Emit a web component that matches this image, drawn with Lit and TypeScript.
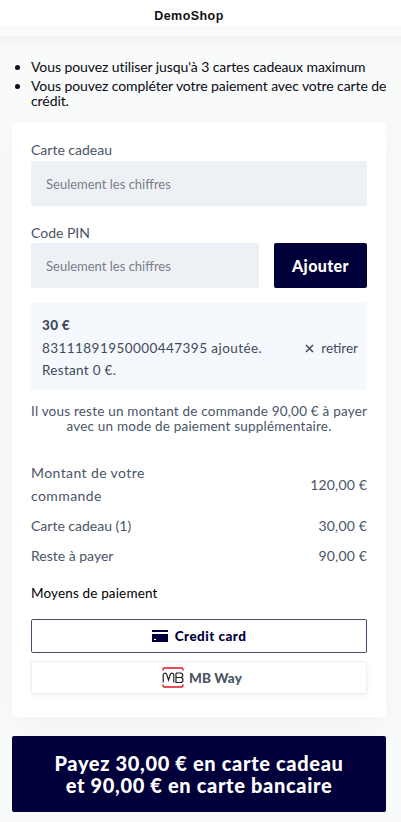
import { LitElement, html, css } from "lit";
import { customElement } from "lit/decorators.js";

@customElement("app-root")
export class AppRoot extends LitElement {
  static styles = css`
    :host { display: block; width: 401px; height: 822px; overflow: hidden; background: #f9fafa;
      font-family: Lato, "Liberation Sans", sans-serif; font-size: 14px; color: #4a5568; box-sizing: border-box; }
    * { box-sizing: border-box; }
    .head { height: 26px; background: #fff; text-align: center; font: 700 12.500px/33px "Liberation Sans", sans-serif; color: #111; letter-spacing: .45px; padding-right: 23px; }
    .fade { height: 14px; margin-top: 10px; background: linear-gradient(#f1f1f2, #f9fafa); }
    ul { margin: 0; padding: 9px 11px 0 31px; color: #0a0a14; font-size: 14px; letter-spacing: -.08px; height: 73px; }
    li { line-height: 15px; margin-bottom: 4px; }
    .card { margin: 0 15px 0 12px; height: 594px; background: #fff; padding: 19px 19px 0; display: flex; flex-direction: column; box-shadow: 0 8px 30px rgba(0,0,30,.035); }
    label { display: block; height: 19px; line-height: 16px; color: #4a5568; }
    .input { height: 45px; background: #edf1f6; border-radius: 2px; padding-left: 15px; display: flex; align-items: center; color: #7a7f87; font-size: 13px; }
    .pin { margin-top: 18px; padding-top: 1px; }
    .pinrow { display: flex; gap: 15px; }
    .pinrow .input { flex: 1; }
    .add { width: 93px; height: 45px; background: #02003a; color: #fff; border-radius: 2px; display: flex; align-items: center; justify-content: center; font-weight: 900; font-size: 16px; letter-spacing: .4px; }
    .info { margin-top: 15px; height: 87px; background: #f5f9fd; padding: 14px 9px 0 11px; color: #3f4a5a; letter-spacing: .3px; font-size: 13.5px; }
    .info b { display: block; height: 20px; line-height: 16px; font-weight: 900; }
    .num { letter-spacing: .44px; }
    .line { display: flex; justify-content: space-between; height: 22px; line-height: 22px; }
    .rm { display: flex; gap: 7px; align-items: center; letter-spacing: 0; }
    .rm svg { width: 9px; height: 9px; }
    .msg { margin-top: 14px; text-align: center; line-height: 15px; font-size: 13.5px; letter-spacing: .21px; white-space: nowrap; }
    .rows { margin-top: 27px; display: flex; flex-direction: column; letter-spacing: 0; }
    .row { display: flex; justify-content: space-between; align-items: center; line-height: 23px; height: 30px; }
    .row.tall { height: 46px; margin-bottom: 3px; }
    .row .l { width: 130px; letter-spacing: .4px; }
    .val { letter-spacing: .15px; }
    h3 { margin: 13px 0 0; font-size: 13.5px; line-height: 20px; font-weight: 400; color: #000; letter-spacing: .15px; }
    .pay { height: 34px; border-radius: 2px; display: flex; align-items: center; justify-content: center; font-weight: 900; font-size: 13.5px; background: #fff; }
    .pay.on { margin-top: 16px; border: 1px solid #4c4a73; color: #02003a; gap: 7px; letter-spacing: .45px; }
    .pay.off { margin-top: 8px; border: 1px solid #eeeeee; box-shadow: 0 2px 5px rgba(0,0,0,.05); color: #4a5568; gap: 5px; height: 33px; letter-spacing: .1px; padding-left: 6px; }
    .big { margin: 19px 15px 0 12px; height: 76px; background: #02003a; color: #fff; border-radius: 2px; display: flex; align-items: center; justify-content: center; text-align: center; font-weight: 900; font-size: 20px; line-height: 22.500px; letter-spacing: .65px; }
  `;

  render() {
    return html`
      <div class="head">DemoShop</div>
      <div class="fade"></div>
      <ul>
        <li>Vous pouvez utiliser jusqu'à 3 cartes cadeaux maximum</li>
        <li>Vous pouvez compléter votre paiement avec votre carte de crédit.</li>
      </ul>
      <div class="card">
        <label>Carte cadeau</label>
        <div class="input">Seulement les chiffres</div>
        <label class="pin">Code PIN</label>
        <div class="pinrow">
          <div class="input">Seulement les chiffres</div>
          <div class="add">Ajouter</div>
        </div>
        <div class="info">
          <b>30 €</b>
          <div class="line"><span class="num">83111891950000447395 ajoutée.</span>
            <span class="rm"><svg viewBox="0 0 9 9"><path d="M1 1l7 7M8 1l-7 7" stroke="#3f4a5a" stroke-width="1.5" fill="none"/></svg>retirer</span></div>
          <div class="line">Restant 0 €.</div>
        </div>
        <div class="msg">Il vous reste un montant de commande 90,00 € à payer<br>avec un mode de paiement supplémentaire.</div>
        <div class="rows">
          <div class="row tall"><span class="l">Montant de votre commande</span><span class="val">120,00 €</span></div>
          <div class="row"><span>Carte cadeau (1)</span><span class="val">30,00 €</span></div>
          <div class="row"><span>Reste à payer</span><span class="val">90,00 €</span></div>
        </div>
        <h3>Moyens de paiement</h3>
        <div class="pay on">
          <svg width="16" height="12" viewBox="0 0 16 12"><path d="M0 0h16v2H0zM0 4h16v8H0z" fill="#02003a"/><rect x="2" y="9" width="2" height="1" fill="#fff"/></svg>
          Credit card
        </div>
        <div class="pay off">
          <svg width="22" height="21" viewBox="0 0 22 21">
            <path d="M1 3.500V2.500A1.500 1.500 0 0 1 2.500 1h17A1.500 1.500 0 0 1 21 2.500v1M1 17.500v1A1.500 1.500 0 0 0 2.500 20h17a1.500 1.500 0 0 0 1.500-1.500v-1" stroke="#e0161d" stroke-width="1.400" fill="none"/>
            <path d="M1.200 15.500V8a1.800 1.800 0 0 1 3.500-.6L6.500 13l1.800-5.600A1.800 1.800 0 0 1 11.800 8v7.500M14 6h4.500a2.250 2.250 0 0 1 0 4.500H14.500M18.500 10.500a2.500 2.500 0 0 1 0 5H14V6" stroke="#1a1a1a" stroke-width="1.150" fill="none"/>
          </svg>
          MB Way
        </div>
      </div>
      <div class="big"><span>Payez 30,00 € en carte cadeau<br>et 90,00 € en carte bancaire</span></div>
    `;
  }
}
